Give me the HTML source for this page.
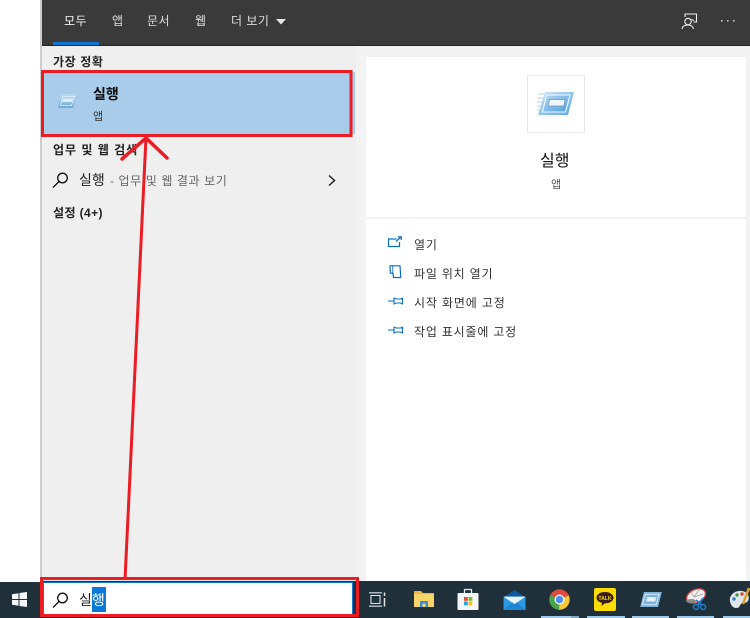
<!DOCTYPE html>
<html lang="ko"><head><meta charset="utf-8">
<style>
html,body{margin:0;padding:0;background:#fff}
#r{position:relative;width:750px;height:618px;overflow:hidden;background:#fff;font-family:"Liberation Sans","Noto Sans CJK KR","NanumGothic",sans-serif;color:#111;filter:blur(.35px)}
#r div,#r span.t{position:absolute;white-space:nowrap}
#r svg{position:absolute;overflow:visible}
.t{line-height:1}
</style></head><body>
<div id="r">
<div style="left:41px;top:0;width:709px;height:582px;background:#f3f3f3"></div>
<div style="left:40px;top:0;width:2px;height:582px;background:#ccc"></div>
<div style="left:42px;top:46px;width:314px;height:536px;background:#efefef"></div>
<div style="left:366px;top:57px;width:380px;height:160px;background:#fff"></div>
<div style="left:366px;top:219px;width:380px;height:363px;background:#fff"></div>
<div style="left:42px;top:0;width:708px;height:45px;background:#3a3a3a"></div>
<div style="left:42px;top:45px;width:708px;height:1px;background:#222"></div>
<div style="left:53px;top:42px;width:46px;height:3px;background:#0a78d4"></div>

<span class="t" style="left:64px;top:15px;font-size:12px;color:#f2f2f2;letter-spacing:.5px">모두</span>
<span class="t" style="left:112px;top:15px;font-size:12px;color:#ddd">앱</span>
<span class="t" style="left:147px;top:15px;font-size:12px;color:#ddd;letter-spacing:.5px">문서</span>
<span class="t" style="left:195px;top:15px;font-size:12px;color:#ddd">웹</span>
<span class="t" style="left:231px;top:15px;font-size:12px;color:#ddd;letter-spacing:.5px">더 보기</span>
<svg style="left:276px;top:19px" width="11" height="6"><path d="M0 0H10L5 5.500Z" fill="#e8e8e8"/></svg>

<svg style="left:681px;top:13px" width="18" height="18" fill="none" stroke="#eee" stroke-width="1.100"><path d="M4 4V1H15.500V9H12.500"/><circle cx="7" cy="8.500" r="3.200"/><path d="M1 16C1.500 13 4 12 7 12S12 13.500 12.500 16M10.500 6.500L13 7.500"/></svg>
<svg style="left:721px;top:20px" width="14" height="3" fill="#c4c4c4"><rect x="0" y="0" width="1.600" height="1.600"/><rect x="6" y="0" width="1.600" height="1.600"/><rect x="12" y="0" width="1.600" height="1.600"/></svg>

<span class="t" style="left:53px;top:56px;font-size:12px;font-weight:bold;color:#222;letter-spacing:.6px">가장 정확</span>

<div style="left:42px;top:72px;width:313px;height:62px;background:#a8cce9"></div>
<svg style="left:56px;top:92px" width="24" height="18" viewBox="0 0 24 18"><defs><linearGradient id="a" x1="0" y1="0" x2="0" y2="1"><stop offset="0" stop-color="#bddcf2"/><stop offset="1" stop-color="#6ea8d8"/></linearGradient></defs><path d="M5 2H21L17 16H2Z" fill="url(#a)"/><path d="M7 6.500H17L16 10H6Z" fill="#dcecf8"/><path d="M6.500 4.500H18.500L15.500 13.500H4.500Z" fill="none" stroke="#e4f1fa" stroke-width=".8"/></svg>
<span class="t" style="left:93px;top:87px;font-size:14px;font-weight:bold;color:#0a0a0a">실행</span>
<span class="t" style="left:93px;top:112px;font-size:11px;color:#333">앱</span>

<span class="t" style="left:53px;top:144px;font-size:12px;font-weight:bold;color:#222;letter-spacing:1px">업무 및 웹 검색</span>
<svg style="left:52px;top:172px" width="17" height="17" fill="none" stroke="#111" stroke-width="1.300"><circle cx="10.500" cy="6" r="4.800"/><path d="M7 9.500L1 15.500"/></svg>
<span class="t" style="left:79px;top:173px;font-size:14px;color:#222">실행</span>
<span class="t" style="left:110px;top:175px;font-size:12px;color:#666;letter-spacing:.6px">- 업무 및 웹 결과 보기</span>
<svg style="left:328px;top:175px" width="8" height="11" fill="none" stroke="#222" stroke-width="1.500"><path d="M1 .5L6.500 5.500L1 10.500"/></svg>
<span class="t" style="left:53px;top:207px;font-size:12px;font-weight:bold;color:#222;letter-spacing:.4px">설정 (4+)</span>

<div style="left:527px;top:75px;width:56px;height:56px;background:#fff;border:1px solid #eaeaea"></div>
<svg style="left:537px;top:90px" width="38" height="28" viewBox="0 0 38 28"><defs><linearGradient id="b" x1="0" y1="0" x2="1" y2="1"><stop offset="0" stop-color="#cfe6f7"/><stop offset=".55" stop-color="#8cc4ec"/><stop offset="1" stop-color="#5aa6e0"/></linearGradient><linearGradient id="c" x1="0" y1="0" x2="1" y2="1"><stop offset="0" stop-color="#b4d9f3"/><stop offset="1" stop-color="#4f9fe0"/></linearGradient></defs>
<g fill="#d8e8f6"><rect x="1" y="3" width="8" height="2"/><rect x="0" y="7" width="8" height="2"/><rect x="0" y="11" width="7" height="2"/><rect x="0" y="15" width="6" height="2"/><rect x="0" y="19" width="5" height="2"/></g>
<path d="M8 2H37L31 25H1Z" fill="url(#b)"/><path d="M9.500 5H33L28.500 22H5.500Z" fill="url(#c)" stroke="#f0f8fe" stroke-width="1.100"/><path d="M12.500 9.500H28L26.800 16H11.200Z" fill="#f0f6fb" stroke="#6c93b5" stroke-width=".7"/></svg>
<span class="t" style="left:540px;top:154px;font-size:16px;color:#111">실행</span>
<span class="t" style="left:551px;top:180px;font-size:11px;color:#555">앱</span>

<svg style="left:387px;top:236px" width="16" height="13" fill="none" stroke="#0a6fc4" stroke-width="1.200"><path d="M12.500 6V10.500H1.500V3H9.500"/><path d="M9 5.500L14 1M11 .8H14.300V4"/></svg>
<span class="t" style="left:414px;top:239px;font-size:12px;color:#333;letter-spacing:.8px">열기</span>
<svg style="left:389px;top:265px" width="13" height="14" fill="none" stroke="#0a6fc4" stroke-width="1.200"><path d="M1 .8H11L11.800 12.500H4.500L4 8.500L1.300 8Z"/><path d="M3.800 1V8.500" stroke-width=".9"/></svg>
<span class="t" style="left:414px;top:268px;font-size:12px;color:#333;letter-spacing:.8px">파일 위치 열기</span>
<svg style="left:388px;top:297px" width="16" height="9" fill="none" stroke="#0a6fc4" stroke-width="1.100"><path d="M0 4H6M6 1.200L8.500 2H12.500L14.500 1.200V7L12.500 6H8.500L6 7Z"/></svg>
<span class="t" style="left:414px;top:297px;font-size:12px;color:#333;letter-spacing:.85px">시작 화면에 고정</span>
<svg style="left:388px;top:326px" width="16" height="9" fill="none" stroke="#0a6fc4" stroke-width="1.100"><path d="M0 4H6M6 1.200L8.500 2H12.500L14.500 1.200V7L12.500 6H8.500L6 7Z"/></svg>
<span class="t" style="left:414px;top:326px;font-size:12px;color:#333;letter-spacing:.8px">작업 표시줄에 고정</span>

<div style="left:0;top:582px;width:750px;height:36px;background:#20303a"></div>
<div style="left:42px;top:581px;width:708px;height:1px;background:#2b2f33"></div>
<svg style="left:12px;top:592px" width="15" height="15" fill="#f4f6f7"><path d="M0 2.200L6.500 1.200V7H0ZM7.500 1L15 0V7H7.500ZM0 8H6.500V13.800L0 12.800ZM7.500 8H15V15L7.500 14Z"/></svg>

<div style="left:43px;top:582px;width:310px;height:33px;background:#0a78d4"></div>
<div style="left:44px;top:583px;width:308px;height:31px;background:#fff"></div>
<svg style="left:52px;top:592px" width="17" height="17" fill="none" stroke="#111" stroke-width="1.300"><circle cx="10.500" cy="6" r="4.800"/><path d="M7 9.500L1 15.500"/></svg>
<div style="left:92px;top:587px;width:14px;height:25px;background:#0a78d4"></div>
<span class="t" style="left:79px;top:593px;font-size:14px;color:#222">실<span style="color:#fff">행</span></span>

<svg style="left:369px;top:592px" width="17" height="15" fill="none" stroke="#dfe3e5" stroke-width="1.100"><path d="M2 3.500H11V11.500H2ZM0 .8H13M0 14.200H13"/><path d="M15.500 .5V4M15.500 6V14.500" stroke-width="1.500"/></svg>

<svg style="left:413px;top:589px" width="22" height="20"><path d="M1 2H8L10 4H21V18H1Z" fill="#e8b93e"/><path d="M1 5H21V18H1Z" fill="#f7d56a"/><path d="M7 18V12H15V18H12.500V14.500H9.500V18Z" fill="#3b8ed0"/></svg>
<svg style="left:457px;top:587px" width="22" height="24"><path d="M7.500 6V2.500H14.500V6" fill="none" stroke="#e8eaec" stroke-width="1.300"/><rect x="0.500" y="6" width="21" height="17" rx="1" fill="#f4f5f6"/><rect x="7" y="10" width="3.800" height="3.800" fill="#e2502b"/><rect x="11.500" y="10" width="3.800" height="3.800" fill="#7db92d"/><rect x="7" y="14.500" width="3.800" height="3.800" fill="#1fa5e8"/><rect x="11.500" y="14.500" width="3.800" height="3.800" fill="#fbbb16"/></svg>
<svg style="left:503px;top:590px" width="23" height="20" viewBox="0 0 23 21"><path d="M11.500 0L23 7.500H0Z" fill="#0e5aa0"/><rect y="7" width="23" height="14" fill="#2b9ae4"/><path d="M0 7H23L11.500 15Z" fill="#e8f4fc"/><path d="M0 21L9 13L11.500 15L14 13L23 21Z" fill="#1f86d4"/></svg>
<svg style="left:549px;top:589px" width="21" height="21" viewBox="0 0 21 21"><circle cx="10.500" cy="10.500" r="10.200" fill="#de4a3c"/><path d="M10.500 10.500L19.800 6.500A10.200 10.200 0 0 1 10 20.700Z" fill="#f7c936"/><path d="M10.500 10.500L10 20.700A10.200 10.200 0 0 1 1.300 6Z" fill="#48a44c"/><circle cx="10.500" cy="10.500" r="5" fill="#fff"/><circle cx="10.500" cy="10.500" r="3.800" fill="#4d8ef0"/></svg>
<div style="left:594px;top:588px;width:22px;height:23px;background:#fcdc00;border-radius:2px"></div>
<svg style="left:596px;top:591px" width="18" height="16"><path d="M9 1C13.700 1 17.500 3.400 17.500 6.700S13.700 12.300 9 12.300L5.500 15L6 11.800C2.700 11 .5 9 .5 6.700C.5 3.400 4.300 1 9 1Z" fill="#3b1e1e"/><text x="9" y="8.800" font-size="5" font-weight="bold" text-anchor="middle" fill="#fcdc00" font-family="Liberation Sans">TALK</text></svg>
<svg style="left:639px;top:591px" width="23" height="17" viewBox="0 0 24 18"><path d="M5 1H24L20 17H1Z" fill="#7db4de"/><path d="M6.500 3.500H21L18 14.500H3.500Z" fill="none" stroke="#dcedf9" stroke-width="1"/><path d="M8.500 6.500H18L17 11H7.500Z" fill="#e6f0f8"/></svg>
<svg style="left:685px;top:588px" width="22" height="23" viewBox="0 0 22 23"><ellipse cx="11" cy="8" rx="10" ry="6.500" transform="rotate(-25 11 8)" fill="#f0eeee" stroke="#d23c3c" stroke-width="1.300"/><path d="M9 9L14 2M9 9L6 3.500M9 9L18 6" stroke="#999" stroke-width=".7"/><ellipse cx="6" cy="13" rx="5" ry="2" fill="#888"/><path d="M11 12L17 17M18 10L13 17" stroke="#1f7ed0" stroke-width="1.600"/><circle cx="11" cy="19" r="2.500" fill="none" stroke="#1f7ed0" stroke-width="1.500"/><circle cx="18" cy="19" r="2.500" fill="none" stroke="#1f7ed0" stroke-width="1.500"/></svg>
<svg style="left:729px;top:587px" width="21" height="24" viewBox="0 0 21 24"><path d="M1 14C0 8 6 3 13 4C19 5 21 10 19 14C17 17 14 15 12 17C10 19 11 21 7 21C4 21 1.500 18 1 14Z" fill="#dfe7ec"/><circle cx="8" cy="8" r="1.700" fill="#3f9a46"/><circle cx="5" cy="12" r="1.700" fill="#2f7fce"/><circle cx="13" cy="7" r="1.700" fill="#d84a3c"/><path d="M20 1L14 17" stroke="#e0a030" stroke-width="2.600"/></svg>

<div style="left:541px;top:616px;width:30px;height:2px;background:#9cc9ea"></div>
<div style="left:571px;top:616px;width:8px;height:2px;background:#7fa6c4"></div>
<div style="left:587px;top:616px;width:38px;height:2px;background:#9cc9ea"></div>
<div style="left:632px;top:616px;width:37px;height:2px;background:#9cc9ea"></div>
<div style="left:677px;top:616px;width:37px;height:2px;background:#9cc9ea"></div>
<div style="left:723px;top:616px;width:27px;height:2px;background:#9cc9ea"></div>

<svg style="left:0;top:0" width="750" height="618" fill="none" stroke="#ec1c24">
<rect x="42.500" y="71.500" width="308.500" height="64" stroke-width="3"/>
<rect x="41.500" y="578.500" width="316" height="37" stroke-width="3"/>
<path d="M146 137L125 580" stroke-width="3"/>
<path d="M122 159L146 138L167 158" stroke-width="3.500" stroke-linecap="round"/>
</svg>
</div>
</body></html>
